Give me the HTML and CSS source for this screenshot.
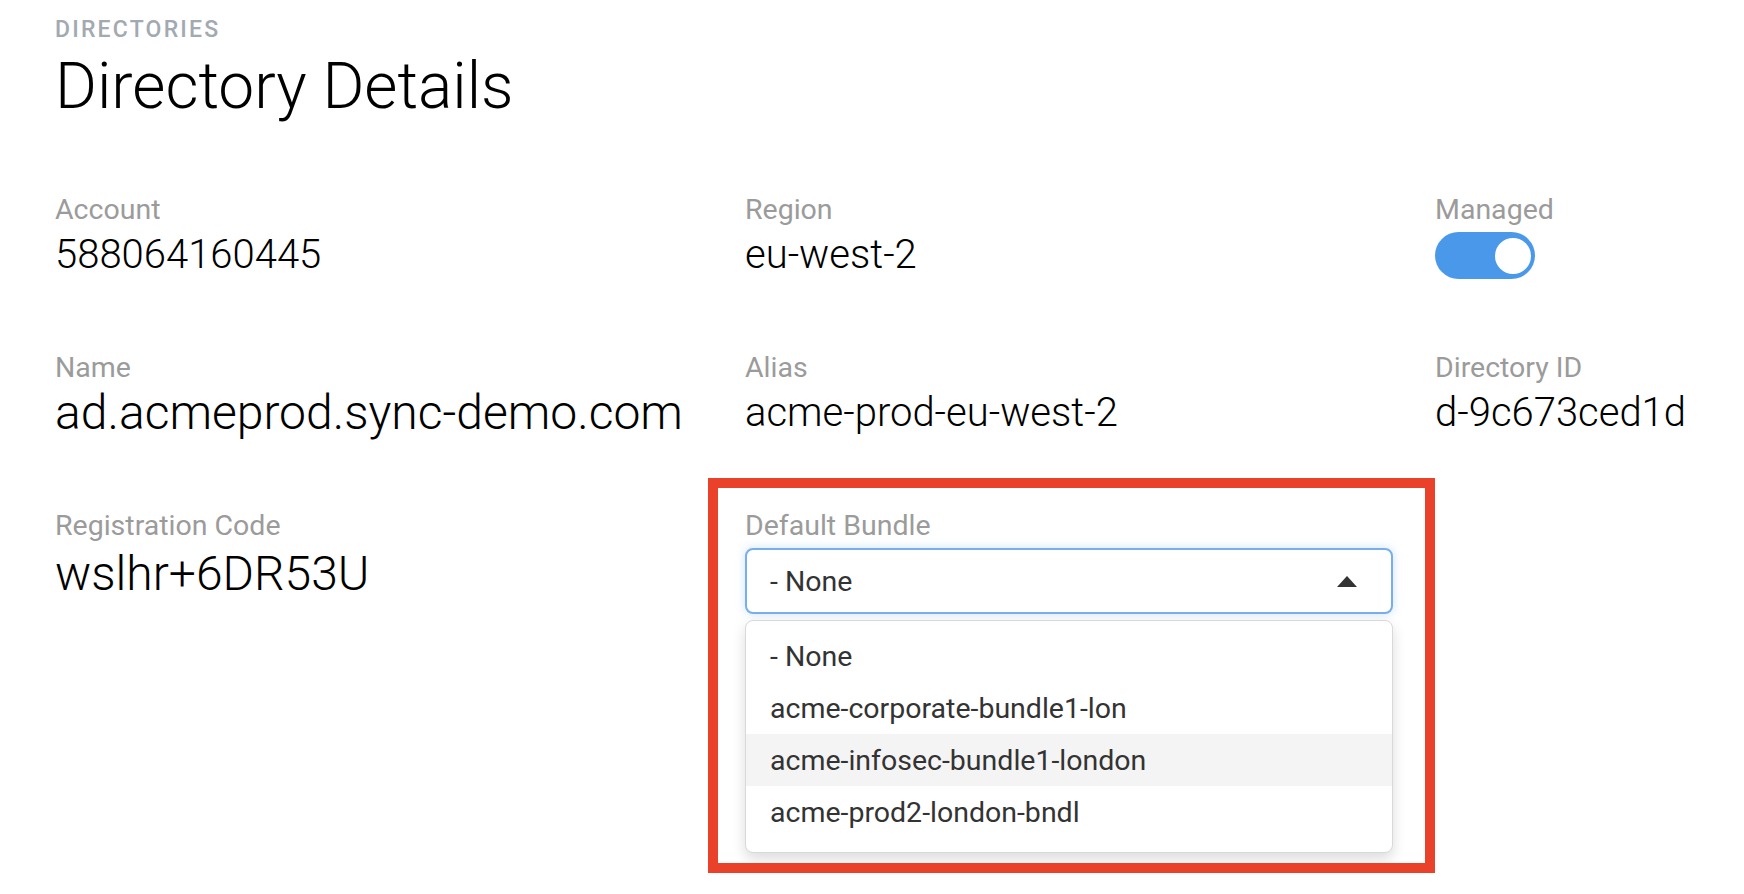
FILE: index.html
```html
<!DOCTYPE html>
<html lang="en">
<head>
<meta charset="utf-8">
<title>Directory Details</title>
<link rel="stylesheet" href="styles.css">
</head>
<body>
<div class="page">
  <header class="head">
    <div class="eyebrow">DIRECTORIES</div>
    <h1 class="title">Directory Details</h1>
  </header>

  <div class="grid">
    <div class="field">
      <div class="label">Account</div>
      <div class="value">588064160445</div>
    </div>
    <div class="field">
      <div class="label">Region</div>
      <div class="value">eu-west-2</div>
    </div>
    <div class="field">
      <div class="label">Managed</div>
      <div class="toggle"><span class="knob"></span></div>
    </div>

    <div class="field">
      <div class="label">Name</div>
      <div class="value value-lg">ad.acmeprod.sync-demo.com</div>
    </div>
    <div class="field">
      <div class="label">Alias</div>
      <div class="value">acme-prod-eu-west-2</div>
    </div>
    <div class="field">
      <div class="label">Directory ID</div>
      <div class="value">d-9c673ced1d</div>
    </div>

    <div class="field">
      <div class="label">Registration Code</div>
      <div class="value value-lg value-low">wslhr+6DR53U</div>
    </div>
    <div class="field">
      <div class="label">Default Bundle</div>
      <div class="select-wrap">
        <div class="select">
          <span class="select-text">- None</span>
          <svg class="caret" width="20" height="11" viewBox="0 0 20 11"><polygon points="10,0 20,11 0,11" fill="#333"/></svg>
        </div>
        <ul class="menu">
          <li class="option">- None</li>
          <li class="option">acme-corporate-bundle1-lon</li>
          <li class="option option-hover">acme-infosec-bundle1-london</li>
          <li class="option">acme-prod2-london-bndl</li>
        </ul>
      </div>
    </div>
  </div>

  <div class="highlight"></div>
</div>
</body>
</html>
```

FILE: styles.css
```css
* { box-sizing: border-box; }

html, body {
  margin: 0;
  padding: 0;
  background: #ffffff;
}

body {
  font-family: Roboto, "Liberation Sans", Arial, sans-serif;
  color: #000;
  width: 1744px;
  height: 894px;
  overflow: hidden;
}

.page {
  position: relative;
  padding: 18px 0 0 55px;
  height: 894px;
}

.head {
  display: flex;
  flex-direction: column;
  gap: 9px;
}

.eyebrow {
  font-size: 23px;
  line-height: 24px;
  font-weight: 500;
  letter-spacing: 2.2px;
  color: #a3a9b1;
}

.title {
  margin: 0;
  font-size: 64px;
  line-height: 72px;
  font-weight: 300;
  color: #000;
}

.grid {
  margin-top: 70px;
  display: grid;
  grid-template-columns: 690px 690px 1fr;
  grid-auto-rows: 86px;
  row-gap: 72px;
}

.field {
  display: flex;
  flex-direction: column;
  align-items: flex-start;
}

.label {
  font-size: 28.5px;
  line-height: 34px;
  color: #9b9b9b;
  font-weight: 400;
}

.value {
  margin-top: 4px;
  font-size: 40px;
  line-height: 48px;
  font-weight: 300;
  color: #000;
  white-space: nowrap;
}

.value-lg {
  font-size: 48px;
}

.value-low {
  margin-top: 7px;
}

.toggle {
  margin-top: 5px;
  width: 100px;
  height: 52px;
  border-radius: 26px;
  background: #4a98ea;
  display: flex;
  align-items: center;
  justify-content: flex-end;
  padding-right: 4px;
}

.knob {
  width: 36px;
  height: 36px;
  border-radius: 50%;
  background: #fff;
}

.select-wrap {
  position: relative;
  margin-top: 5px;
  width: 648px;
}

.select {
  height: 66px;
  border: 2px solid #78aee9;
  border-radius: 8px;
  box-shadow: 0 0 10px rgba(74, 152, 234, 0.28);
  display: flex;
  align-items: center;
  justify-content: space-between;
  padding: 0 34px 0 23px;
  background: #fff;
}

.select-text {
  font-size: 28.5px;
  color: #333;
}

.caret { display: block; }

.menu {
  position: absolute;
  left: 0;
  right: 0;
  top: calc(100% + 6px);
  margin: 0;
  padding: 9px 0 14px;
  list-style: none;
  background: #fff;
  border: 1px solid #d9d9d9;
  border-radius: 8px;
  box-shadow: 0 6px 14px rgba(0, 0, 0, 0.14);
}

.option {
  height: 52px;
  display: flex;
  align-items: center;
  padding-left: 24px;
  font-size: 28.5px;
  color: #333;
}

.option-hover {
  background: #f4f4f4;
}

.highlight {
  position: absolute;
  left: 708px;
  top: 478px;
  width: 727px;
  height: 395px;
  border: 10px solid #e9412a;
  pointer-events: none;
}
```
